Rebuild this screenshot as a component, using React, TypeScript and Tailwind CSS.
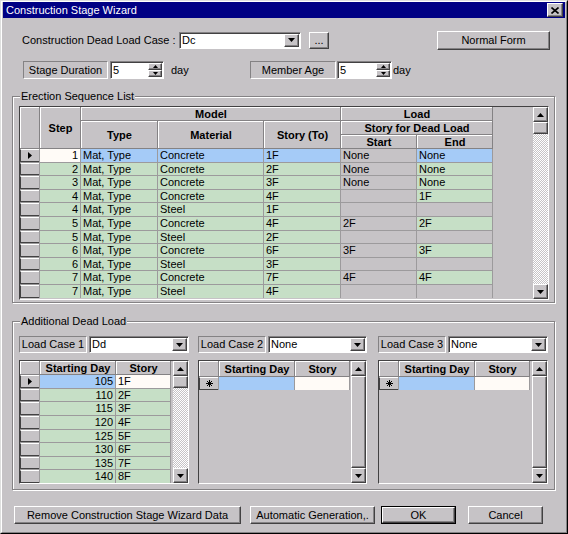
import React from 'react';

const RAISED =
  'bg-[#c6c3c6] border border-t-white border-l-white border-r-[#424142] border-b-[#424142] shadow-[inset_-1px_-1px_0_#848284]';
const SUNKEN =
  'bg-white border border-t-[#848284] border-l-[#848284] border-r-white border-b-white shadow-[inset_1px_1px_0_#424142]';
const STATIC =
  'border border-t-[#848284] border-l-[#848284] border-r-white border-b-white whitespace-nowrap';
const DITHER =
  'bg-[repeating-conic-gradient(#ffffff_0_25%,#c6c3c6_0_50%)] bg-[length:2px_2px]';
const HDR =
  'flex items-center justify-center bg-[#c6c3c6] border-t border-l border-white font-bold whitespace-nowrap';

function Tri({ dir, small }: { dir: 'up' | 'down' | 'right'; small?: boolean }) {
  if (dir === 'right')
    return (
      <svg width="4" height="7" viewBox="0 0 4 7">
        <path d="M0 0L4 3.5L0 7Z" fill="#000" />
      </svg>
    );
  const w = small ? 5 : 7;
  const h = small ? 3 : 4;
  const d = dir === 'up' ? `M${w / 2} 0L${w} ${h}H0Z` : `M0 0H${w}L${w / 2} ${h}Z`;
  return (
    <svg width={w} height={h} viewBox={`0 0 ${w} ${h}`}>
      <path d={d} fill="#000" />
    </svg>
  );
}

function Star() {
  return (
    <svg width="7" height="7" viewBox="0 0 7 7" stroke="#000" strokeWidth="1">
      <path d="M3.5 0V7M0 3.5H7M1 1L6 6M6 1L1 6" />
    </svg>
  );
}

function Combo({ value, className = '' }: { value: string; className?: string }) {
  return (
    <div className={`flex h-[17px] p-px ${SUNKEN} ${className}`}>
      <span className="flex-1 pl-px leading-[13px]">{value}</span>
      <div className={`w-[15px] flex items-center justify-center ${RAISED}`}>
        <Tri dir="down" />
      </div>
    </div>
  );
}

function Spin({ value, className = '' }: { value: string; className?: string }) {
  return (
    <div className={`flex h-[18px] p-px ${SUNKEN} ${className}`}>
      <span className="flex-1 pl-px leading-[14px]">{value}</span>
      <div className="w-[14px] flex flex-col">
        <div className={`flex-1 flex items-center justify-center ${RAISED}`}>
          <Tri dir="up" small />
        </div>
        <div className={`flex-1 flex items-center justify-center ${RAISED}`}>
          <Tri dir="down" small />
        </div>
      </div>
    </div>
  );
}

function Button({ label, className = '' }: { label: string; className?: string }) {
  return (
    <div className={`flex items-center justify-center whitespace-nowrap ${RAISED} ${className}`}>{label}</div>
  );
}

function VScroll({ full }: { full?: boolean }) {
  return (
    <div className="w-[15px] shrink-0 flex flex-col">
      <div className={`h-[15px] flex items-center justify-center ${RAISED}`}>
        <Tri dir="up" />
      </div>
      {full ? (
        <div className={`flex-1 ${RAISED}`} />
      ) : (
        <>
          <div className={`h-[12px] ${RAISED}`} />
          <div className={`flex-1 ${DITHER}`} />
        </>
      )}
      <div className={`h-[15px] flex items-center justify-center ${RAISED}`}>
        <Tri dir="down" />
      </div>
    </div>
  );
}

function GroupBox({
  title,
  className = '',
  children,
}: {
  title: string;
  className?: string;
  children: React.ReactNode;
}) {
  return (
    <div
      className={`relative ml-[10px] w-[543px] border border-[#848284] shadow-[inset_1px_1px_0_#ffffff,1px_1px_0_#ffffff] ${className}`}
    >
      <span className="absolute -top-[7px] left-[7px] px-px bg-[#c6c3c6] leading-[13px] whitespace-nowrap">{title}</span>
      {children}
    </div>
  );
}

const GREEN = 'bg-[#c6dfc6]';
const BLUE = 'bg-[#a5cbf7]';
const CREAM = 'bg-[#fffbf7]';
const GRAY = 'bg-[#c6c3c6]';
const CELL = 'px-[2px] leading-[12.6px] whitespace-nowrap overflow-hidden';
const IND =
  'bg-[#c6c3c6] border-t border-t-white border-l border-l-[#424142] border-b border-b-[#424142] flex items-center justify-center';

const steps = [
  { step: 1, mat: 'Concrete', story: '1F', start: 'None', end: 'None' },
  { step: 2, mat: 'Concrete', story: '2F', start: 'None', end: 'None' },
  { step: 3, mat: 'Concrete', story: '3F', start: 'None', end: 'None' },
  { step: 4, mat: 'Concrete', story: '4F', start: '', end: '1F' },
  { step: 4, mat: 'Steel', story: '1F', start: '', end: '' },
  { step: 5, mat: 'Concrete', story: '4F', start: '2F', end: '2F' },
  { step: 5, mat: 'Steel', story: '2F', start: '', end: '' },
  { step: 6, mat: 'Concrete', story: '6F', start: '3F', end: '3F' },
  { step: 6, mat: 'Steel', story: '3F', start: '', end: '' },
  { step: 7, mat: 'Concrete', story: '7F', start: '4F', end: '4F' },
  { step: 7, mat: 'Steel', story: '4F', start: '', end: '' },
];

const loads = [
  ['105', '1F'],
  ['110', '2F'],
  ['115', '3F'],
  ['120', '4F'],
  ['125', '5F'],
  ['130', '6F'],
  ['135', '7F'],
  ['140', '8F'],
];

function ErectionGrid() {
  return (
    <div className="ml-[6px] mt-[9px] w-[530px] h-[194px] flex border border-t-[#424142] border-l-[#424142] border-r-white border-b-white">
      <div className="w-[473px] flex flex-col overflow-hidden">
        <div className="grid grid-cols-[19px_40px_76px_105px_76px_75px_75px] grid-rows-[13px_13px_13px] gap-px bg-[#848284] border-r border-b border-[#848284]">
          <div className={`row-span-3 ${HDR}`} />
          <div className={`row-span-3 ${HDR}`}>Step</div>
          <div className={`col-span-3 ${HDR}`}>Model</div>
          <div className={`col-span-2 ${HDR}`}>Load</div>
          <div className={`row-span-2 ${HDR}`}>Type</div>
          <div className={`row-span-2 ${HDR}`}>Material</div>
          <div className={`row-span-2 ${HDR}`}>Story (To)</div>
          <div className={`col-span-2 ${HDR}`}>Story for Dead Load</div>
          <div className={HDR}>Start</div>
          <div className={HDR}>End</div>
        </div>
        <div className="grid grid-cols-[19px_40px_76px_105px_76px_75px_75px] auto-rows-[12.6px] gap-px bg-[#9c9a9c] border-r border-[#9c9a9c]">
          {steps.map((r, i) => {
            const sel = i === 0;
            const main = sel ? BLUE : GREEN;
            const end = sel ? BLUE : r.mat === 'Concrete' ? GREEN : GRAY;
            return (
              <React.Fragment key={i}>
                <div className={IND}>{sel && <Tri dir="right" />}</div>
                <div className={`${CELL} text-right ${sel ? CREAM : GREEN}`}>{r.step}</div>
                <div className={`${CELL} ${main}`}>Mat, Type</div>
                <div className={`${CELL} ${main}`}>{r.mat}</div>
                <div className={`${CELL} ${main}`}>{r.story}</div>
                <div className={`${CELL} ${GRAY}`}>{r.start}</div>
                <div className={`${CELL} ${end}`}>{r.end}</div>
              </React.Fragment>
            );
          })}
        </div>
      </div>
      <div className="flex-1" />
      <VScroll />
    </div>
  );
}

function LoadColumn({ n, value, filled, className = '' }: { n: number; value: string; filled?: boolean; className?: string }) {
  return (
    <div className={`flex flex-col ${className}`}>
      <div className="flex h-[17px]">
        <div className={`w-[68px] flex items-center justify-center ${STATIC}`}>Load Case {n}</div>
        <Combo value={value} className="ml-[2px] flex-1" />
      </div>
      <div className="mt-[7px] h-[124px] flex border border-t-[#424142] border-l-[#424142] border-r-white border-b-white">
        <div className="w-[151px] flex flex-col overflow-hidden">
          <div className="grid grid-cols-[19px_75px_54px] h-[16px] gap-px bg-[#848284] border-r border-b border-[#848284]">
            <div className={HDR} />
            <div className={HDR}>Starting Day</div>
            <div className={HDR}>Story</div>
          </div>
          <div className="grid grid-cols-[19px_75px_54px] auto-rows-[12.6px] gap-px bg-[#9c9a9c] border-r border-[#9c9a9c]">
            {filled ? (
              loads.map(([d, s], i) => (
                <React.Fragment key={i}>
                  <div className={IND}>{i === 0 && <Tri dir="right" />}</div>
                  <div className={`${CELL} text-right ${i === 0 ? BLUE : GREEN}`}>{d}</div>
                  <div className={`${CELL} ${i === 0 ? CREAM : GREEN}`}>{s}</div>
                </React.Fragment>
              ))
            ) : (
              <>
                <div className={IND}>
                  <Star />
                </div>
                <div className={BLUE} />
                <div className={CREAM} />
              </>
            )}
          </div>
        </div>
        <div className="flex-1" />
        <VScroll full={!filled} />
      </div>
    </div>
  );
}

export default function App() {
  return (
    <div className="w-[568px] h-[534px] overflow-hidden bg-[#c6c3c6] border border-t-[#dedfde] border-l-[#dedfde] border-r-black border-b-black font-['Liberation_Sans',Arial,sans-serif] text-[11px] leading-none text-black select-none">
      <div className="h-full border border-t-white border-l-white border-r-[#848284] border-b-[#848284]">
        <div className="mx-px h-[16px] bg-[#000084] flex items-center">
          <span className="pl-[3px] text-white">Construction Stage Wizard</span>
          <div className={`ml-auto mr-[2px] w-[16px] h-[14px] flex items-center justify-center ${RAISED}`}>
            <svg width="8" height="7" viewBox="0 0 8 7" stroke="#000" strokeWidth="1.6">
              <path d="M0.5 0.5L7.5 6.5M7.5 0.5L0.5 6.5" />
            </svg>
          </div>
        </div>

        <div className="mt-[13px] h-[18px] flex items-center">
          <span className="ml-[20px] w-[157px] whitespace-nowrap">Construction Dead Load Case :</span>
          <Combo value="Dc" className="w-[122px]" />
          <Button label="..." className="ml-[8px] w-[20px] h-[17px]" />
          <Button label="Normal Form" className="ml-[108px] w-[113px] h-[19px]" />
        </div>

        <div className="mt-[12px] h-[18px] flex items-center">
          <div className={`ml-[21px] w-[85px] h-[18px] flex items-center justify-center ${STATIC}`}>Stage Duration</div>
          <Spin value="5" className="ml-[2px] w-[54px]" />
          <span className="w-[86px] pl-[7px]">day</span>
          <div className={`w-[86px] h-[18px] flex items-center justify-center ${STATIC}`}>Member Age</div>
          <Spin value="5" className="ml-px w-[55px]" />
          <span className="pl-px">day</span>
        </div>

        <GroupBox title="Erection Sequence List" className="mt-[17px] h-[207px]">
          <ErectionGrid />
        </GroupBox>

        <GroupBox title="Additional Dead Load" className="mt-[18px] h-[169px]">
          <div className="pl-[6px] pt-[14px] flex">
            <LoadColumn n={1} value="Dd" filled className="w-[170px]" />
            <LoadColumn n={2} value="None" className="ml-[9px] w-[169px]" />
            <LoadColumn n={3} value="None" className="ml-[11px] w-[170px]" />
          </div>
        </GroupBox>

        <div className="mt-[16px] h-[18px] flex">
          <Button label="Remove Construction Stage Wizard Data" className="ml-[12px] w-[227px]" />
          <Button label="Automatic Generation,." className="ml-[9px] w-[125px]" />
          <div className="ml-[6px] w-[75px] border border-black flex">
            <Button label="OK" className="flex-1" />
          </div>
          <Button label="Cancel" className="ml-[12px] w-[75px]" />
        </div>
      </div>
    </div>
  );
}
